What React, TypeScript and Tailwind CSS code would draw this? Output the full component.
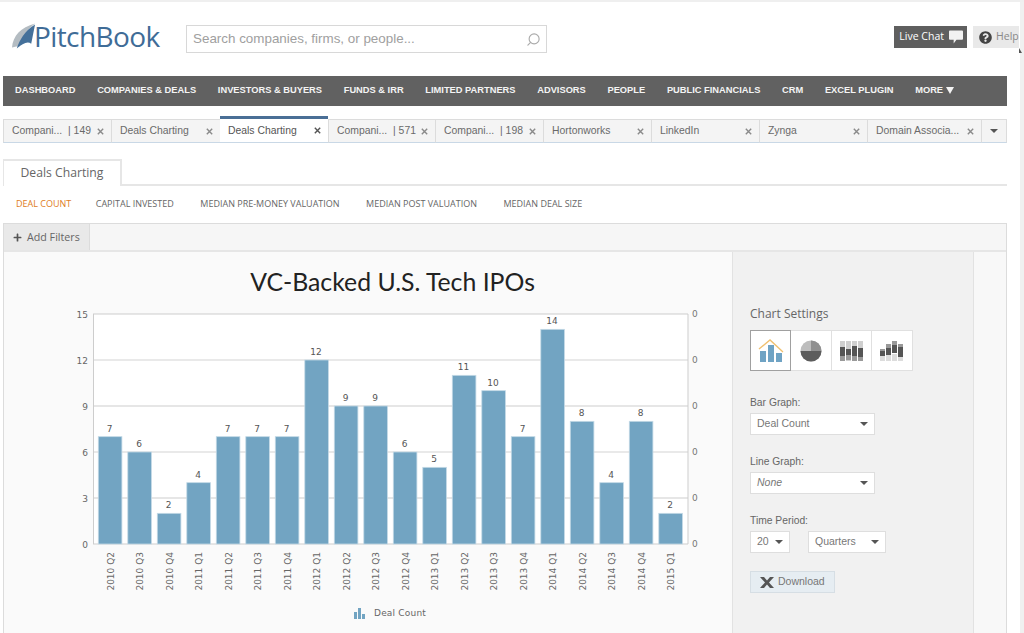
import { FaPlus, FaQuestionCircle } from 'react-icons/fa';
import { Search } from 'lucide-react';

// =====================================================
// DATA
// =====================================================

const NAV_ITEMS = [
  'DASHBOARD',
  'COMPANIES & DEALS',
  'INVESTORS & BUYERS',
  'FUNDS & IRR',
  'LIMITED PARTNERS',
  'ADVISORS',
  'PEOPLE',
  'PUBLIC FINANCIALS',
  'CRM',
  'EXCEL PLUGIN',
];

const TABS = [
  { label: 'Compani...  | 149', width: 108 },
  { label: 'Deals Charting', width: 109 },
  { label: 'Deals Charting', width: 108, active: true },
  { label: 'Compani...  | 571', width: 107 },
  { label: 'Compani...  | 198', width: 108 },
  { label: 'Hortonworks', width: 108 },
  { label: 'LinkedIn', width: 108 },
  { label: 'Zynga', width: 108 },
  { label: 'Domain Associa...', width: 114 },
];

const SUB_TABS = ['CAPITAL INVESTED', 'MEDIAN PRE-MONEY VALUATION', 'MEDIAN POST VALUATION', 'MEDIAN DEAL SIZE'];

const BARS = [
  ['2010 Q2', 7], ['2010 Q3', 6], ['2010 Q4', 2], ['2011 Q1', 4], ['2011 Q2', 7],
  ['2011 Q3', 7], ['2011 Q4', 7], ['2012 Q1', 12], ['2012 Q2', 9], ['2012 Q3', 9],
  ['2012 Q4', 6], ['2013 Q1', 5], ['2013 Q2', 11], ['2013 Q3', 10], ['2013 Q4', 7],
  ['2014 Q1', 14], ['2014 Q2', 8], ['2014 Q3', 4], ['2014 Q4', 8], ['2015 Q1', 2],
] as const;

const TICKS = [15, 12, 9, 6, 3, 0];
const BASE_Y = 544;
const UNIT = 230 / 15;

// =====================================================
// SMALL PARTS
// =====================================================

function Caret({ className = '' }: { className?: string }) {
  return (
    <svg width="8" height="4" viewBox="0 0 8 4" className={className}>
      <path d="M0 0h8L4 4z" fill="#555" />
    </svg>
  );
}

function CloseIcon({ dark }: { dark?: boolean }) {
  return (
    <svg width="7" height="7" viewBox="0 0 7 7">
      <path d="M.8.8l5.4 5.4M6.2.8L.8 6.2" stroke={dark ? '#555' : '#8a8a8a'} strokeWidth="1.4" />
    </svg>
  );
}

function Logo() {
  return (
    <div className="flex w-[149px] shrink-0 items-center">
      <svg width="24" height="28" viewBox="0 0 25 28" className="mt-[1px] shrink-0">
        <path d="M0 25C1 13 9 4 24 0c-7 5-12 13-16 24-2 0-5 0-8 1z" fill="#b4bcc2" />
        <path d="M5 26C8 17 13 8 24 1l-4 20c-4-3-9 0-15 5z" fill="#44709a" />
      </svg>
      <span className="-ml-[2px] -mt-[2px] font-['Open_Sans',sans-serif] text-[28px] leading-none tracking-[-0.6px] text-[#3f6c97]">PitchBook</span>
    </div>
  );
}

function SelectBox({ value, width, italic }: { value: string; width: string; italic?: boolean }) {
  return (
    <div className={`${width} flex h-[22px] items-center justify-between border border-[#dedede] bg-white pl-[6px] pr-[6px] text-[10.5px] text-[#777] ${italic ? 'italic' : ''}`}>
      <span>{value}</span>
      <Caret />
    </div>
  );
}

function ChartTypeIcons() {
  return (
    <div className="mt-[7px] flex h-[41px] w-[163px]">
      <div className="flex w-[41px] items-center justify-center border border-[#a0a0a0] bg-white">
        <svg width="26" height="24" viewBox="0 0 26 24">
          <rect x="2" y="12" width="6" height="11" fill="#6fa3c4" />
          <rect x="10" y="6" width="6" height="17" fill="#6fa3c4" />
          <rect x="18" y="14" width="6" height="9" fill="#6fa3c4" />
          <path d="M1 10L12 1l13 12" fill="none" stroke="#f0c070" strokeWidth="1.4" />
        </svg>
      </div>
      <div className="flex w-[41px] items-center justify-center border border-l-0 border-[#e0e0e0] bg-white">
        <svg width="22" height="22" viewBox="0 0 22 22">
          <circle cx="11" cy="11" r="10.5" fill="#bdbdbd" />
          <path d="M.5 11a10.5 10.5 0 0 0 21 0z" fill="#5c5c5c" />
          <path d="M11 .5a10.5 10.5 0 0 1 10.5 10.5H11z" fill="#909090" />
        </svg>
      </div>
      <div className="flex w-[40px] items-center justify-center border border-l-0 border-[#e0e0e0] bg-white">
        <svg width="24" height="20" viewBox="0 0 24 20">
          {[0, 6, 12, 18].map((x, i) => (
            <g key={x}>
              <rect x={x} y="0" width="5" height="20" fill="#cfcfcf" />
              <rect x={x} y={[15, 14, 15, 16][i]} width="5" height="5" fill="#999" />
              <rect x={x} y={[6, 8, 5, 7][i]} width="5" height={[9, 6, 10, 9][i]} fill="#555" />
            </g>
          ))}
        </svg>
      </div>
      <div className="flex w-[41px] items-center justify-center border border-l-0 border-[#e0e0e0] bg-white">
        <svg width="24" height="20" viewBox="0 0 24 20">
          {[0, 6, 12, 18].map((x, i) => (
            <g key={x}>
              <rect x={x} y="13" width="5" height="7" fill="#dcdcdc" />
              <rect x={x} y={[10, 7, 3, 5][i]} width="5" height={[5, 7, 9, 11][i]} fill="#555" />
              <rect x={x} y={[8, 3, 0, 3][i]} width="5" height={[2, 4, 4, 3][i]} fill="#999" />
            </g>
          ))}
        </svg>
      </div>
    </div>
  );
}

// Bar chart, drawn in page coordinates through the viewBox
function DealChart() {
  return (
    <svg width="728" height="328" viewBox="4 305 728 328" className="block">
      <rect x="93.5" y="314" width="594.5" height="230" fill="white" />
      {TICKS.map((tick) => {
        const y = BASE_Y - tick * UNIT;
        const light = tick === 12 || tick === 6;
        return (
          <g key={tick} fontFamily="'DejaVu Sans', sans-serif" fontSize="9">
            <line x1="93" x2="688" y1={y} y2={y} stroke={light ? '#e2e2e2' : '#cdcdcd'} strokeWidth={light ? 1.4 : 1} />
            <text x="88" y={y + 3.5} textAnchor="end" fill="#666">{tick}</text>
            <text x="692" y={y + 3} fill="#777">0</text>
          </g>
        );
      })}
      <line x1="93.5" x2="93.5" y1="314" y2="544" stroke="#cdcdcd" />
      <line x1="688" x2="688" y1="314" y2="544" stroke="#cdcdcd" />
      {BARS.map(([label, value], i) => {
        const x = 98.3 + i * 29.5;
        const top = BASE_Y - value * UNIT;
        const cx = x + 11.8;
        return (
          <g key={label} fontFamily="'DejaVu Sans', sans-serif" fontSize="9">
            <rect x={x} y={top} width="23.6" height={value * UNIT} fill="#72a4c2" stroke="#c3d9e6" strokeWidth="0.8" />
            <text x={cx - 0.5} y={top - 5} textAnchor="middle" fill="#555">{value}</text>
            <text transform={`translate(${cx + 3.5} 552) rotate(-90)`} textAnchor="end" fill="#666">{label}</text>
          </g>
        );
      })}
      <g fill="#72a4c2">
        <rect x="354" y="612" width="3" height="7" />
        <rect x="358" y="608" width="3" height="11" />
        <rect x="362" y="614" width="3" height="5" />
      </g>
      <text x="374" y="616" fontSize="9" letterSpacing="0.2" fill="#666" fontFamily="'DejaVu Sans', sans-serif">Deal Count</text>
    </svg>
  );
}

// =====================================================
// PAGE
// =====================================================

export default function App() {
  return (
    <div className="relative flex h-[633px] w-[1024px] flex-col overflow-hidden border-t-2 border-[#efefef] bg-white font-['Liberation_Sans',sans-serif]">
      {/* page edge on the right */}
      <div className="absolute bottom-0 right-0 top-0 w-[4px] bg-[#f0f0f0]" />
      <div className="absolute right-[2px] top-[46px] h-0 w-0 border-l-[3px] border-t-[5px] border-l-[#555] border-t-transparent" />

      {/* header */}
      <header className="flex h-[74px] shrink-0 items-start pl-[12px] pr-[5px] pt-[20px]">
        <Logo />
        <div className="ml-[25px] mt-[3px] flex h-[28px] w-[361px] items-center justify-between border border-[#d8d8d8] pl-[6px] pr-[5px] text-[13.4px] text-[#a0a0a0]">
          <span>Search companies, firms, or people...</span>
          <Search size={15} strokeWidth={1.8} className="-scale-x-100 text-[#aaa]" />
        </div>
        <div className="ml-auto mt-[4px] flex h-[22px] items-center gap-[5px] bg-[#5f5f5f] pl-[5px] pr-[4px] font-['Open_Sans',sans-serif] text-[10.5px] text-white">
          <span>Live Chat</span>
          <svg width="14" height="14" viewBox="0 0 15 14">
            <path d="M1 0h13a1 1 0 0 1 1 1v8a1 1 0 0 1-1 1H8l-3 4v-4H1a1 1 0 0 1-1-1V1a1 1 0 0 1 1-1z" fill="#f2f2f2" />
          </svg>
        </div>
        <div className="ml-[6px] mt-[4px] flex h-[22px] w-[46px] items-center gap-[4px] bg-[#e9e9e9] pl-[6px] font-['Open_Sans',sans-serif] text-[10.5px] text-[#888]">
          <FaQuestionCircle size={13} className="text-[#444]" />
          <span>Help</span>
        </div>
      </header>

      {/* main nav */}
      <nav className="ml-[3px] flex h-[30px] w-[1004px] shrink-0 items-center gap-[21.7px] bg-[#616161] pl-[12px] text-[9.3px] font-bold text-[#f4f4f4]">
        {NAV_ITEMS.map((item) => (
          <span key={item} className="whitespace-nowrap">{item}</span>
        ))}
        <span className="flex items-center gap-[3px] whitespace-nowrap">
          MORE
          <svg width="8" height="7" viewBox="0 0 8 7" className="-mt-[1px]"><path d="M0 0h8L4 7z" fill="#f4f4f4" /></svg>
        </span>
      </nav>

      {/* open tabs */}
      <div className="ml-[3px] mt-[10px] flex h-[27px] w-[1004px] shrink-0 items-end">
        {TABS.map((tab, i) =>
          tab.active ? (
            <div key={i} style={{ width: tab.width }} className="flex h-[27px] items-center justify-between border-b border-[#c9d8e6] border-t-[3px] border-t-[#4a6f96] bg-white pl-[8px] pr-[7px] text-[10.4px] text-[#555]">
              <span>{tab.label}</span>
              <CloseIcon dark />
            </div>
          ) : (
            <div key={i} style={{ width: tab.width }} className="flex h-[24px] items-center justify-between border-b border-l border-t border-b-[#c9d8e6] border-l-[#dcdcdc] border-t-[#dcdcdc] bg-[#f4f4f4] pl-[8px] pr-[7px] text-[10.4px] text-[#6a6a6a]">
              <span className="whitespace-pre">{tab.label}</span>
              <CloseIcon />
            </div>
          ),
        )}
        <div className="flex h-[24px] flex-1 items-center justify-center border border-[#dcdcdc] border-b-[#c9d8e6] bg-[#f4f4f4]">
          <Caret />
        </div>
      </div>

      {/* section tab */}
      <div className="ml-[3px] mt-[16px] h-[27px] w-[1004px] shrink-0 border-b-2 border-[#e6e6e6]">
        <div className="flex h-[27px] w-[119px] items-center justify-center border-l border-r-2 border-t-2 border-[#e6e6e6] bg-white font-['Open_Sans',sans-serif] text-[12.2px] text-[#666]">
          Deals Charting
        </div>
      </div>

      {/* metric links */}
      <div className="ml-[16px] mt-[11px] flex h-[13px] shrink-0 items-center gap-[26.5px] font-['Open_Sans',sans-serif] text-[9px] text-[#666]">
        <span className="-mr-[2px] text-[#e07c22]">DEAL COUNT</span>
        {SUB_TABS.map((item) => (
          <span key={item}>{item}</span>
        ))}
      </div>

      {/* chart panel */}
      <div className="ml-[3px] mt-[13px] flex w-[1004px] flex-1 flex-col border-l border-r border-t border-[#dcdcdc] bg-[#f8f8f8]">
        <div className="flex h-[28px] shrink-0 border-b-2 border-[#e6e6e6] bg-[#f6f6f6]">
          <div className="flex w-[86px] items-center gap-[5px] border-r border-[#dcdcdc] bg-[#e9e9e9] pl-[9px] font-['Open_Sans',sans-serif] text-[10.7px] text-[#666]">
            <FaPlus size={9} className="text-[#555]" />
            <span>Add Filters</span>
          </div>
        </div>
        <div className="flex flex-1">
          <div className="flex w-[728px] shrink-0 flex-col bg-[#fafafa]">
            <h1 className="flex h-[53px] items-center justify-center pl-[49px] pt-[7px] font-['Lato',sans-serif] text-[24.8px] font-normal leading-none text-[#222]">
              VC-Backed U.S. Tech IPOs
            </h1>
            <DealChart />
          </div>
          <aside className="w-[242px] shrink-0 border-l border-r border-[#e2e2e2] bg-[#f1f1f1] pl-[17px] pt-[53px] text-[10.3px] text-[#666]">
            <div className="font-['Open_Sans',sans-serif] text-[12px] leading-[18px] text-[#666]">Chart Settings</div>
            <ChartTypeIcons />
            <div className="mt-[25px] leading-[14px]">Bar Graph:</div>
            <div className="mt-[3px]"><SelectBox value="Deal Count" width="w-[125px]" /></div>
            <div className="mt-[20px] leading-[14px]">Line Graph:</div>
            <div className="mt-[3px]"><SelectBox value="None" width="w-[125px]" italic /></div>
            <div className="mt-[20px] leading-[14px]">Time Period:</div>
            <div className="mt-[3px] flex gap-[18px]">
              <SelectBox value="20" width="w-[40px]" />
              <SelectBox value="Quarters" width="w-[78px]" />
            </div>
            <div className="mt-[18px] flex h-[22px] w-[85px] items-center gap-[4px] border border-[#d6dee4] bg-[#e6edf2] pl-[9px] text-[10.5px] text-[#777]">
              <svg width="14" height="11" viewBox="0 0 14 11">
                <path d="M0 0h4l3 3.5L10 0h4L9 5.5 14 11h-4L7 7.5 4 11H0l5-5.5z" fill="#555" />
              </svg>
              <span>Download</span>
            </div>
          </aside>
        </div>
      </div>
    </div>
  );
}
